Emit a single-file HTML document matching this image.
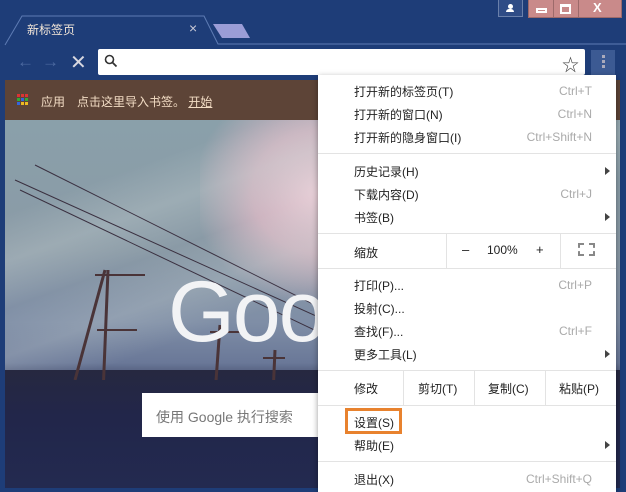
<!DOCTYPE html>
<html><head><meta charset="utf-8"><style>
*{margin:0;padding:0;box-sizing:border-box}
body{width:626px;height:492px;overflow:hidden;position:relative;background:#1e3d78;font-family:"Liberation Sans","Noto Sans CJK SC",sans-serif;font-size:12px}
.abs{position:absolute}
.menu{position:absolute;left:318px;top:75px;width:298px;height:417px;background:#fff;box-shadow:0 2px 6px rgba(0,0,0,.4);color:#222}
.it{position:absolute;left:36px;font-size:12px}
.sc{position:absolute;right:24px;color:#aaa;font-size:12px;margin-top:1px}
.sep{position:absolute;left:0;right:0;height:1px;background:#e3e3e3}
.arr{position:absolute;right:6px;width:0;height:0;border-left:5px solid #444;border-top:4px solid transparent;border-bottom:4px solid transparent}
</style></head><body>
<div class="abs" style="left:498px;top:0;width:25px;height:17px;background:#2f4c86;border:1px solid #6a80aa;border-top:none"></div>
<div class="abs" style="left:506px;top:4px;width:8px;height:8px;"><div style="width:5px;height:5px;border-radius:50%;background:#fff;margin-left:1.5px"></div><div style="width:8px;height:3px;background:#fff;border-radius:3px 3px 0 0"></div></div>
<div class="abs" style="left:528px;top:0;width:94px;height:18px;background:#c98a8a;border:1px solid #9d6a6a;border-top:none"></div>
<div class="abs" style="left:553px;top:0;width:1px;height:18px;background:#9d6a6a"></div>
<div class="abs" style="left:578px;top:0;width:1px;height:18px;background:#9d6a6a"></div>
<div class="abs" style="left:536px;top:8px;width:11px;height:5px;border:2px solid #fff"></div>
<div class="abs" style="left:560px;top:4px;width:11px;height:10px;border:2px solid #fff;border-top-width:3px"></div>
<div class="abs" style="left:593px;top:0;color:#fff;font-size:13px;font-weight:bold">X</div>
<svg class="abs" style="left:0;top:0" width="626" height="46"><path d="M5 45 L22 16 L204 16 L218 44 L626 44" fill="none" stroke="#5e7cb4" stroke-width="1"/><path d="M213 24 L242 24 L250 38 L222 38Z" fill="#9b9dd6"/></svg>
<div class="abs" style="left:27px;top:21px;color:#f2e6d8;font-size:12px">新标签页</div>
<div class="abs" style="left:189px;top:20px;color:#c9c9d6;font-size:14px">×</div>
<div class="abs" style="left:17px;top:52px;color:#4d6aa0;font-size:17px">←</div>
<div class="abs" style="left:42px;top:52px;color:#4d6aa0;font-size:17px">→</div>
<div class="abs" style="left:70px;top:50px;color:#d8d8e0;font-size:20px">✕</div>
<div class="abs" style="left:98px;top:49px;width:487px;height:26px;background:#fff;border-radius:2px"></div>
<svg class="abs" style="left:104px;top:54px" width="14" height="14"><circle cx="5.5" cy="5.5" r="4" fill="none" stroke="#333" stroke-width="1.6"/><path d="M8.5 8.5 L12.5 12.5" stroke="#333" stroke-width="1.8"/></svg>
<div class="abs" style="left:562px;top:51px;color:#444;font-size:17px">☆</div>
<div class="abs" style="left:591px;top:50px;width:24px;height:25px;background:#3c5a93"></div>
<div class="abs" style="left:602px;top:55px;width:3px;height:3px;background:#aab;box-shadow:0 5px 0 #aab,0 10px 0 #aab"></div>
<div class="abs" style="left:5px;top:80px;width:615px;height:40px;background:#5d4437"></div>
<svg class="abs" style="left:17px;top:94px" width="12" height="12"><rect x="0" y="0" width="3" height="3" fill="#d33"/><rect x="4" y="0" width="3" height="3" fill="#d33"/><rect x="8" y="0" width="3" height="3" fill="#d33"/><rect x="0" y="4" width="3" height="3" fill="#3a3"/><rect x="4" y="4" width="3" height="3" fill="#36d"/><rect x="8" y="4" width="3" height="3" fill="#3a3"/><rect x="0" y="8" width="3" height="3" fill="#36d"/><rect x="4" y="8" width="3" height="3" fill="#eb2"/><rect x="8" y="8" width="3" height="3" fill="#eb2"/></svg>
<div class="abs" style="left:41px;top:93px;color:#f2dcc4">应用</div>
<div class="abs" style="left:77px;top:93px;color:#f2dcc4">点击这里导入书签。 <span style="text-decoration:underline">开始</span></div>
<div class="abs" style="left:5px;top:120px;width:615px;height:368px;background:linear-gradient(180deg,#8aa0aa 0%,#8a9aa6 35%,#7f8ea6 55%,#6a7898 66%,#2a2f4e 74%,#1f2444 100%)"></div>
<div class="abs" style="left:200px;top:120px;width:200px;height:180px;background:radial-gradient(ellipse at 60% 40%,#e8d0d8 0%,#cdb4c0 40%,rgba(180,170,185,0) 75%)"></div>
<div class="abs" style="left:5px;top:120px;width:615px;height:250px;background:linear-gradient(160deg,rgba(255,255,255,0) 20%,rgba(200,210,210,.3) 30%,rgba(255,255,255,0) 40%,rgba(200,210,210,.25) 50%,rgba(255,255,255,0) 60%)"></div>
<div class="abs" style="left:5px;top:370px;width:615px;height:118px;background:linear-gradient(180deg,#262840 0%,#22264a 40%,#232a50 100%)"></div>
<svg class="abs" style="left:5px;top:120px" width="320" height="260"><g stroke="#3a3040" stroke-width="1" fill="none"><path d="M10 60 L320 200"/><path d="M15 70 L320 215"/><path d="M30 45 L320 190"/></g><g stroke="#4a3438" stroke-width="3"><path d="M103 150 L98 275"/><path d="M215 205 L210 275"/><path d="M270 230 L268 275"/><path d="M100 150 L70 260"/></g><g stroke="#4a3438" stroke-width="2"><path d="M90 155 L140 155"/><path d="M92 210 L132 210"/><path d="M205 212 L240 212"/><path d="M258 238 L280 238"/></g></svg>
<div class="abs" style="left:168px;top:262px;color:#f2f3f5;font-size:86px;font-family:'Liberation Sans',sans-serif;letter-spacing:-2px;line-height:100px">Goo</div>
<div class="abs" style="left:142px;top:393px;width:176px;height:44px;background:#fff"></div>
<div class="abs" style="left:156px;top:407px;color:#777;font-size:14px">使用 Google 执行搜索</div>
<div class="menu">
<div class="it" style="top:8px">打开新的标签页(T)</div><div class="sc" style="top:8px">Ctrl+T</div>
<div class="it" style="top:31px">打开新的窗口(N)</div><div class="sc" style="top:31px">Ctrl+N</div>
<div class="it" style="top:54px">打开新的隐身窗口(I)</div><div class="sc" style="top:54px">Ctrl+Shift+N</div>
<div class="sep" style="top:78px"></div>
<div class="it" style="top:88px">历史记录(H)</div><div class="arr" style="top:92px"></div>
<div class="it" style="top:111px">下载内容(D)</div><div class="sc" style="top:111px">Ctrl+J</div>
<div class="it" style="top:134px">书签(B)</div><div class="arr" style="top:138px"></div>
<div class="sep" style="top:158px"></div>
<div class="it" style="top:169px">缩放</div>
<div class="abs" style="left:128px;top:158px;width:1px;height:35px;background:#e3e3e3"></div>
<div class="abs" style="left:242px;top:158px;width:1px;height:35px;background:#e3e3e3"></div>
<div class="abs" style="left:144px;top:167px;font-size:13px">–</div>
<div class="abs" style="left:169px;top:168px">100%</div>
<div class="abs" style="left:218px;top:167px;font-size:13px">+</div>
<div class="abs" style="left:260px;top:168px;width:17px;height:13px;border:2px dashed #888"></div>
<div class="sep" style="top:193px"></div>
<div class="it" style="top:202px">打印(P)...</div><div class="sc" style="top:202px">Ctrl+P</div>
<div class="it" style="top:225px">投射(C)...</div>
<div class="it" style="top:248px">查找(F)...</div><div class="sc" style="top:248px">Ctrl+F</div>
<div class="it" style="top:271px">更多工具(L)</div><div class="arr" style="top:275px"></div>
<div class="sep" style="top:295px"></div>
<div class="it" style="top:305px">修改</div>
<div class="abs" style="left:85px;top:295px;width:1px;height:35px;background:#e3e3e3"></div>
<div class="abs" style="left:156px;top:295px;width:1px;height:35px;background:#e3e3e3"></div>
<div class="abs" style="left:227px;top:295px;width:1px;height:35px;background:#e3e3e3"></div>
<div class="abs" style="left:100px;top:305px">剪切(T)</div>
<div class="abs" style="left:170px;top:305px">复制(C)</div>
<div class="abs" style="left:241px;top:305px">粘贴(P)</div>
<div class="sep" style="top:330px"></div>
<div class="abs" style="left:27px;top:333px;width:57px;height:26px;border:3px solid #e8822e"></div>
<div class="it" style="top:339px">设置(S)</div>
<div class="it" style="top:362px">帮助(E)</div><div class="arr" style="top:366px"></div>
<div class="sep" style="top:386px"></div>
<div class="it" style="top:396px">退出(X)</div><div class="sc" style="top:396px">Ctrl+Shift+Q</div>
</div>
</body></html>
